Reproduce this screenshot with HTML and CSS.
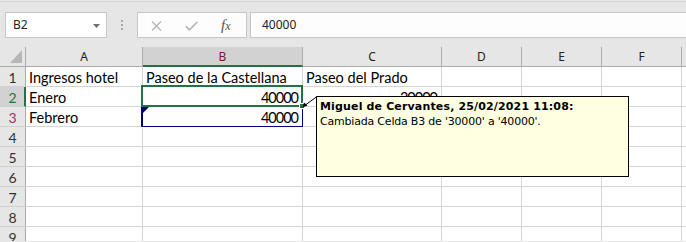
FILE: index.html
```html
<!DOCTYPE html>
<html lang="es">
<head>
<meta charset="utf-8">
<title>Hoja</title>
<link rel="stylesheet" href="styles.css">
</head>
<body>
<div class="app">
  <div class="formula-bar">
    <div class="name-box">
      <span class="name-text">B2</span>
      <svg class="dd" width="7" height="4" viewBox="0 0 7 4"><path d="M0 0H7L3.5 4Z" fill="#6f6f6f"/></svg>
    </div>
    <div class="grip"><i></i><i></i><i></i></div>
    <div class="fx-buttons">
      <svg class="ico-x" width="11" height="10" viewBox="0 0 11 10"><path d="M1 0.5L10 9.5M10 0.5L1 9.5" stroke="#b3b3b3" stroke-width="1.3" fill="none"/></svg>
      <svg class="ico-check" width="13" height="10" viewBox="0 0 13 10"><path d="M0.8 5.2L4.4 8.8L12.2 1" stroke="#b3b3b3" stroke-width="1.6" fill="none"/></svg>
      <span class="fx">f<span class="fx-x">x</span></span>
    </div>
    <div class="formula-input">40000</div>
  </div>

  <div class="sheet">
    <div class="grid">
      <div class="corner"><svg width="12" height="13" viewBox="0 0 12 13"><path d="M12 0V13H0Z" fill="#b7b7b7"/></svg></div>
      <div class="ch">A</div><div class="ch ch-sel">B</div><div class="ch">C</div><div class="ch">D</div><div class="ch">E</div><div class="ch">F</div><div class="ch"></div>

      <div class="rh">1</div><div class="c">Ingresos hotel</div><div class="c">Paseo de la Castellana</div><div class="c">Paseo del Prado</div><div class="c"></div><div class="c"></div><div class="c"></div><div class="c"></div>
      <div class="rh rh-sel">2</div><div class="c">Enero</div><div class="c num">40000</div><div class="c num">30000</div><div class="c"></div><div class="c"></div><div class="c"></div><div class="c"></div>
      <div class="rh rh-3">3</div><div class="c">Febrero</div><div class="c num">40000</div><div class="c"></div><div class="c"></div><div class="c"></div><div class="c"></div><div class="c"></div>
      <div class="rh">4</div><div class="c"></div><div class="c"></div><div class="c"></div><div class="c"></div><div class="c"></div><div class="c"></div><div class="c"></div>
      <div class="rh">5</div><div class="c"></div><div class="c"></div><div class="c"></div><div class="c"></div><div class="c"></div><div class="c"></div><div class="c"></div>
      <div class="rh">6</div><div class="c"></div><div class="c"></div><div class="c"></div><div class="c"></div><div class="c"></div><div class="c"></div><div class="c"></div>
      <div class="rh">7</div><div class="c"></div><div class="c"></div><div class="c"></div><div class="c"></div><div class="c"></div><div class="c"></div><div class="c"></div>
      <div class="rh">8</div><div class="c"></div><div class="c"></div><div class="c"></div><div class="c"></div><div class="c"></div><div class="c"></div><div class="c"></div>
      <div class="rh">9</div><div class="c"></div><div class="c"></div><div class="c"></div><div class="c"></div><div class="c"></div><div class="c"></div><div class="c"></div>
    </div>

    <div class="sel-blue"><span class="change-mark"></span></div>
    <div class="sel-green"></div>
    <div class="fill-handle"></div>
    <svg class="arrow" width="24" height="18" viewBox="0 0 24 18"><path d="M4 13L17 3.5" stroke="#000" stroke-width="1" fill="none"/><path d="M2.5 14.5L4 9.5L7.5 12.5Z" fill="#000"/></svg>
    <div class="comment">
      <div class="comment-author">Miguel de Cervantes, 25/02/2021 11:08:</div>
      <div class="comment-text">Cambiada Celda B3 de '30000' a '40000'.</div>
    </div>
  </div>
</div>
</body>
</html>
```

FILE: styles.css
```css
* { box-sizing: border-box; }
html, body { margin: 0; padding: 0; }
body {
  width: 686px;
  height: 242px;
  overflow: hidden;
  background: #e6e6e6;
  font-family: "Noto Sans", "Open Sans", sans-serif;
}
.app { width: 686px; height: 242px; overflow: hidden; }

/* formula bar */
.formula-bar {
  margin-top: 1px;
  border-top: 1px solid #d5d5d5;
  height: 46px;
  padding-top: 10px;
  display: flex;
  align-items: flex-start;
  background: #e6e6e6;
}
.name-box {
  margin-left: 5px;
  width: 102px;
  height: 26px;
  background: #fff;
  border: 1px solid #c6c6c6;
  display: flex;
  align-items: center;
  justify-content: space-between;
  padding: 0 6px 0 7px;
}
.name-text { font-size: 12px; color: #222; line-height: 24px; }
.dd { display: block; margin-top: 1px; }
.grip {
  margin-left: 14px;
  width: 2px;
  padding-top: 8px;
  display: flex;
  flex-direction: column;
  gap: 2px;
}
.grip i { display: block; width: 2px; height: 2px; background: #a8a8a8; }
.fx-buttons {
  margin-left: 14px;
  width: 110px;
  height: 26px;
  background: #fdfdfd;
  border: 1px solid #c6c6c6;
  display: flex;
  align-items: center;
  padding-left: 13px;
}
.ico-x { display: block; margin-top: 1px; }
.ico-check { display: block; margin-left: 23px; margin-top: 1px; }
.fx {
  margin-left: 23px;
  font-family: "Liberation Serif", "DejaVu Serif", serif;
  font-style: italic;
  font-size: 15px;
  color: #555;
  line-height: 24px;
}
.fx-x { font-size: 12px; }
.formula-input {
  margin-left: 3px;
  flex: 1;
  height: 26px;
  background: #fdfdfd;
  border: 1px solid #c6c6c6;
  border-right: none;
  font-size: 12px;
  color: #222;
  line-height: 24px;
  padding-left: 11px;
}

/* sheet */
.sheet {
  position: relative;
  background: #fff;
  height: 194px;
  overflow: hidden;
}
.grid {
  display: grid;
  grid-template-columns: 26px 117px 160px 139px 80px 80px 80px 1fr;
  grid-template-rows: 20px;
  grid-auto-rows: 20px;
}
.corner {
  background: #e6e6e6;
  border-right: 1px solid #ababab;
  border-bottom: 1px solid #ababab;
  display: flex;
  align-items: flex-end;
  justify-content: flex-end;
  padding: 0 3px 3px 0;
}
.corner svg { display: block; }
.ch {
  background: #e6e6e6;
  border-right: 1px solid #ababab;
  border-bottom: 1px solid #ababab;
  text-align: center;
  font-size: 12px;
  line-height: 19px;
  color: #222;
}
.ch-sel {
  background: #d2d2d2;
  border-bottom: 2px solid #217346;
  color: #7f1d1d;
}
.rh {
  background: #e6e6e6;
  border-right: 1px solid #ababab;
  border-bottom: 1px solid #d0d0d0;
  text-align: center;
  font-family: Lato, "Noto Sans", sans-serif;
  font-size: 14px;
  line-height: 19px;
  padding-top: 1px;
  color: #333;
}
.rh-sel {
  background: #d2d2d2;
  border-right: 2px solid #217346;
  color: #217346;
  padding-left: 1px;
}
.rh-3 { color: #9c2f63; }
.c {
  border-right: 1px solid #d4d4d4;
  border-bottom: 1px solid #d4d4d4;
  font-family: Lato, "Noto Sans", sans-serif;
  font-size: 14.5px;
  line-height: 19px;
  padding: 1px 3px 0;
  color: #000;
  white-space: nowrap;
  overflow: visible;
}
.num { text-align: right; letter-spacing: -1px; padding-right: 4px; }

/* overlays */
.sel-green {
  position: absolute;
  left: 141px;
  top: 38px;
  width: 162px;
  height: 22px;
  border: 2px solid #217346;
}
.sel-blue {
  position: absolute;
  left: 141px;
  top: 59px;
  width: 162px;
  height: 21px;
  border: 1px solid #00007f;
  border-left-width: 2px;
}
.change-mark {
  position: absolute;
  left: 0;
  top: 0;
  width: 0;
  height: 0;
  border-top: 6px solid #00007f;
  border-right: 6px solid transparent;
}
.fill-handle {
  position: absolute;
  left: 299px;
  top: 56px;
  width: 6px;
  height: 6px;
  background: #217346;
  border: 1px solid #fff;
}
.arrow {
  position: absolute;
  left: 300px;
  top: 46px;
}
.comment {
  position: absolute;
  left: 316px;
  top: 49px;
  width: 313px;
  height: 81px;
  background: #ffffe1;
  border: 1px solid #000;
  padding: 2px 3px 1px;
  font-family: "DejaVu Sans", Tahoma, sans-serif;
  font-size: 11px;
  line-height: 15px;
  color: #000;
  white-space: nowrap;
}
.comment-author { font-weight: bold; letter-spacing: 0.15px; }
.comment-text { letter-spacing: -0.2px; }
```
